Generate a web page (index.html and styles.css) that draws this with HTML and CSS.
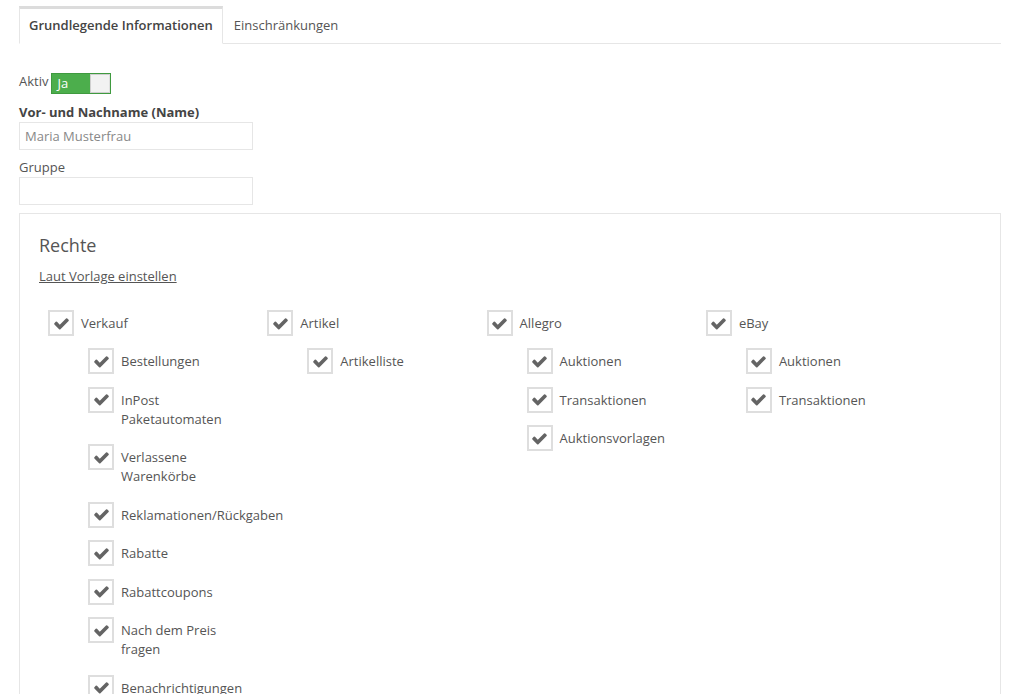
FILE: index.html
```html
<!DOCTYPE html>
<html lang="de">
<head>
<meta charset="utf-8">
<title>Benutzer</title>
<link rel="stylesheet" href="styles.css">
</head>
<body>
<svg width="0" height="0" class="defs">
  <symbol id="chk" viewBox="0 0 1792 1792"><path d="M1671 566q0 40-28 68l-724 724-136 136q-28 28-68 28t-68-28l-136-136-362-362q-28-28-28-68t28-68l136-136q28-28 68-28t68 28l294 295 656-657q28-28 68-28t68 28l136 136q28 28 28 68z"/></symbol>
</svg>
<div class="page">
  <ul class="tabs">
    <li class="tab active">Grundlegende Informationen</li>
    <li class="tab">Einschränkungen</li>
  </ul>

  <div class="aktiv-row">
    <span class="aktiv-label">Aktiv</span>
    <span class="toggle"><span class="toggle-on">Ja</span><span class="toggle-knob"></span></span>
  </div>

  <label class="field-label bold">Vor- und Nachname (Name)</label>
  <div class="input"><span class="placeholder">Maria Musterfrau</span></div>

  <label class="field-label">Gruppe</label>
  <div class="input"></div>

  <div class="panel">
    <h2 class="panel-title">Rechte</h2>
    <a class="link">Laut Vorlage einstellen</a>

    <div class="grid">
      <div class="col">
        <div class="item"><span class="cb"><svg><use href="#chk"/></svg></span><span class="lbl">Verkauf</span></div>
        <div class="sub">
          <div class="item"><span class="cb"><svg><use href="#chk"/></svg></span><span class="lbl">Bestellungen</span></div>
          <div class="item"><span class="cb"><svg><use href="#chk"/></svg></span><span class="lbl">InPost Paketautomaten</span></div>
          <div class="item"><span class="cb"><svg><use href="#chk"/></svg></span><span class="lbl">Verlassene Warenkörbe</span></div>
          <div class="item"><span class="cb"><svg><use href="#chk"/></svg></span><span class="lbl">Reklamationen/Rückgaben</span></div>
          <div class="item"><span class="cb"><svg><use href="#chk"/></svg></span><span class="lbl">Rabatte</span></div>
          <div class="item"><span class="cb"><svg><use href="#chk"/></svg></span><span class="lbl">Rabattcoupons</span></div>
          <div class="item"><span class="cb"><svg><use href="#chk"/></svg></span><span class="lbl">Nach dem Preis fragen</span></div>
          <div class="item"><span class="cb"><svg><use href="#chk"/></svg></span><span class="lbl">Benachrichtigungen</span></div>
        </div>
      </div>
      <div class="col">
        <div class="item"><span class="cb"><svg><use href="#chk"/></svg></span><span class="lbl">Artikel</span></div>
        <div class="sub">
          <div class="item"><span class="cb"><svg><use href="#chk"/></svg></span><span class="lbl">Artikelliste</span></div>
        </div>
      </div>
      <div class="col">
        <div class="item"><span class="cb"><svg><use href="#chk"/></svg></span><span class="lbl">Allegro</span></div>
        <div class="sub">
          <div class="item"><span class="cb"><svg><use href="#chk"/></svg></span><span class="lbl">Auktionen</span></div>
          <div class="item"><span class="cb"><svg><use href="#chk"/></svg></span><span class="lbl">Transaktionen</span></div>
          <div class="item"><span class="cb"><svg><use href="#chk"/></svg></span><span class="lbl">Auktionsvorlagen</span></div>
        </div>
      </div>
      <div class="col">
        <div class="item"><span class="cb"><svg><use href="#chk"/></svg></span><span class="lbl">eBay</span></div>
        <div class="sub">
          <div class="item"><span class="cb"><svg><use href="#chk"/></svg></span><span class="lbl">Auktionen</span></div>
          <div class="item"><span class="cb"><svg><use href="#chk"/></svg></span><span class="lbl">Transaktionen</span></div>
        </div>
      </div>
    </div>
  </div>
</div>
</body>
</html>
```

FILE: styles.css
```css
html, body {
  margin: 0;
  padding: 0;
  background: #fff;
}
body {
  font-family: "Open Sans", "Liberation Sans", sans-serif;
  font-size: 13px;
  line-height: 19px;
  color: #555;
  overflow: hidden;
}
.defs {
  position: absolute;
  width: 0;
  height: 0;
}
.page {
  padding: 6px 23px 0 19px;
}
.tabs {
  list-style: none;
  margin: 0;
  padding: 0;
  display: flex;
  border-bottom: 1px solid #e6e6e6;
}
.tab {
  padding: 7px 10px 8px 10px;
  border-top: 3px solid transparent;
  border-left: 1px solid transparent;
  border-right: 1px solid transparent;
  margin-bottom: -1px;
  color: #555;
}
.tab.active {
  padding: 7px 9px 8px 9px;
  border-top-color: #dcdcdc;
  border-left-color: #e6e6e6;
  border-right-color: #e6e6e6;
  border-bottom: 1px solid #fff;
  font-weight: 600;
  color: #444;
  background: #fff;
}
.aktiv-row {
  display: flex;
  align-items: flex-start;
  margin-top: 29px;
  height: 21px;
}
.aktiv-label {
  line-height: 19px;
  margin-top: -1px;
}
.toggle {
  display: flex;
  width: 60px;
  height: 21px;
  box-sizing: border-box;
  border: 1px solid #3f9a3f;
  background: #4cae4c;
  margin-left: 3px;
}
.toggle-on {
  flex: 1;
  color: #fff;
  padding-left: 5px;
  line-height: 19px;
  font-size: 13px;
}
.toggle-knob {
  width: 20px;
  height: 19px;
  box-sizing: border-box;
  background: #f2f2f2;
  border: 1px solid #cfcfcf;
  border-right-color: #e0e0e0;
}
.field-label {
  display: block;
  margin-top: 7.5px;
  line-height: 19px;
  color: #555;
}
.field-label.bold {
  font-weight: 700;
  color: #444;
  margin-top: 8.5px;
}
.input {
  width: 234px;
  height: 28px;
  box-sizing: border-box;
  border: 1px solid #e6e6e6;
  padding: 0 5px;
  line-height: 26px;
  margin-top: 0.5px;
}
.placeholder {
  color: #888;
}
.panel {
  margin-top: 7.5px;
  border: 1px solid #e6e6e6;
  padding: 20px 19px 40px 19px;
  min-height: 600px;
}
.panel-title {
  margin: 0;
  font-size: 18px;
  line-height: 22px;
  font-weight: 400;
  color: #555;
}
.link {
  display: inline-block;
  margin-top: 11px;
  text-decoration: underline;
  color: #555;
}
.grid {
  display: grid;
  grid-template-columns: repeat(4, 219.3px);
  margin-top: 24.5px;
}
.col {
  padding-left: 9px;
}
.sub {
  margin-left: 40px;
  margin-top: -0.5px;
}
.item {
  display: flex;
  align-items: flex-start;
  margin-bottom: 12.5px;
}
.cb {
  flex: none;
  width: 26px;
  height: 26px;
  box-sizing: border-box;
  border: 2px solid #dedede;
  background: #fff;
  display: flex;
  align-items: center;
  justify-content: center;
}
.cb svg {
  width: 17px;
  height: 17px;
  fill: #646464;
}
.lbl {
  padding: 4px 0 3px 0;
  margin-left: 7px;
  line-height: 19px;
  color: #555;
}
```
